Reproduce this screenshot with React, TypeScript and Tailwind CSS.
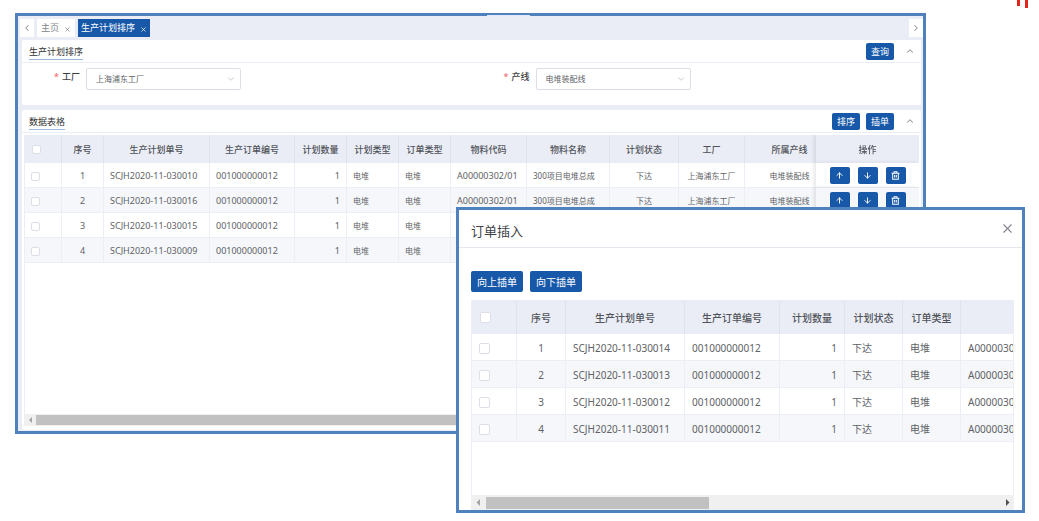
import React from "react";
import { ArrowDown, ArrowUp, ChevronDown, ChevronLeft, ChevronRight, ChevronUp, X } from "lucide-react";

type PlanRow = { plan: string };

const mainRows: PlanRow[] = [
  { plan: "SCJH2020-11-030010" },
  { plan: "SCJH2020-11-030016" },
  { plan: "SCJH2020-11-030015" },
  { plan: "SCJH2020-11-030009" },
];

const insertRows: PlanRow[] = [
  { plan: "SCJH2020-11-030014" },
  { plan: "SCJH2020-11-030013" },
  { plan: "SCJH2020-11-030012" },
  { plan: "SCJH2020-11-030011" },
];

const mainWidths = [37, 42, 106, 85, 52, 52, 52, 76, 83, 69, 66, 90, 103];
const insertWidths = [45, 49, 119, 95, 65, 58, 58, 201];

function Columns({ widths }: { widths: number[] }) {
  return (
    <colgroup>
      {widths.map((w, i) => (
        <col key={i} style={{ width: w }} />
      ))}
    </colgroup>
  );
}

function Tick({ label, large }: { label: string; large?: boolean }) {
  return (
    <input
      type="checkbox"
      aria-label={label}
      className={`block appearance-none rounded-xs border border-[#dcdfe6] bg-white checked:bg-[#1858a8] ${
        large ? "size-[11px]" : "size-[9px]"
      }`}
    />
  );
}

function TrashIcon() {
  return (
    <svg viewBox="0 0 16 16" className="size-[9px]" fill="none" stroke="currentColor" strokeWidth="1.8">
      <path d="M1 4h14M5.5 4V1.5h5V4M3 4v10.5h10V4M6.5 7v4.5M9.5 7v4.5" />
    </svg>
  );
}

function PrimaryButton({ children }: { children: React.ReactNode }) {
  return (
    <button className="h-[17px] w-7 rounded-xs bg-[#1858a8] text-[9px] leading-none text-white">{children}</button>
  );
}

function IconButton({ label, children }: { label: string; children: React.ReactNode }) {
  return (
    <button
      aria-label={label}
      className="flex h-[17px] w-5 items-center justify-center rounded-xs bg-[#1858a8] text-white"
    >
      {children}
    </button>
  );
}

function Field({ id, label, value }: { id: string; label: string; value: string }) {
  return (
    <div className="flex items-start gap-[6px]">
      <label htmlFor={id} className="w-[58px] pt-[3px] text-right text-[9px] leading-3 font-medium text-[#3d4045]">
        <span className="mr-[3px] text-[#f56c6c]">*</span>
        {label}
      </label>
      <div className="relative w-[155px]">
        <select
          id={id}
          className="block h-[22px] w-full appearance-none rounded-xs border border-[#dcdfe6] bg-white px-[9px] text-[8px] text-[#606266]"
        >
          <option>{value}</option>
        </select>
        <ChevronDown
          className="pointer-events-none absolute top-[6px] right-[5px] size-[10px] text-[#c0c4cc]"
          strokeWidth={2}
        />
      </div>
    </div>
  );
}

function CardHeader({ title, children }: { title: string; children: React.ReactNode }) {
  return (
    <div className="flex h-[23px] items-center border-b border-[#ebeef5] pr-[6px] pl-[7px]">
      <h2 className="border-b border-[#9dbbdd] pt-px text-[9px] leading-[15px] text-[#303133]">{title}</h2>
      <div className="ml-auto flex items-center gap-[6px]">
        {children}
        <button aria-label="收起" className="ml-[5px] text-[#909399]">
          <ChevronUp className="size-[10px]" strokeWidth={2.5} />
        </button>
      </div>
    </div>
  );
}

const mainHead =
  "h-[28px] border-r border-[#dfe3ec] bg-[#eaedf5] px-0 pt-px text-center text-[9px] font-medium text-[#50535a]";
const mainBase = "h-[25px] border-r border-b border-[#ebeef5] px-[6px] pt-[2px] whitespace-nowrap";
const mainCell = `${mainBase} text-[8px]`;
const mainCode = `${mainBase} text-[9px]`;

function MainTable() {
  const heads = [
    "序号",
    "生产计划单号",
    "生产订单编号",
    "计划数量",
    "计划类型",
    "订单类型",
    "物料代码",
    "物料名称",
    "计划状态",
    "工厂",
    "所属产线",
  ];
  return (
    <table className="w-[calc(100%+19px)] table-fixed border-separate border-spacing-0 leading-3 text-[#606266]">
      <Columns widths={mainWidths} />
      <thead>
        <tr>
          <th className={`${mainHead} pl-[7px]`}>
            <Tick label="全选" />
          </th>
          {heads.map((h) => (
            <th key={h} className={mainHead}>
              {h}
            </th>
          ))}
          <th className="sticky right-0 bg-[#eaedf5] pt-px text-center text-[9px] font-medium text-[#50535a] shadow-[-2px_0_4px_rgba(0,0,0,0.1)]">
            操作
          </th>
        </tr>
      </thead>
      <tbody>
        {mainRows.map((r, i) => (
          <tr key={r.plan} className="bg-white even:bg-[#f5f7fa]">
            <td className={mainCell}>
              <Tick label={`选择第${i + 1}行`} />
            </td>
            <td className={`${mainCode} text-center`}>{i + 1}</td>
            <td className={mainCode}>{r.plan}</td>
            <td className={mainCode}>001000000012</td>
            <td className={`${mainCode} text-right`}>1</td>
            <td className={mainCell}>电堆</td>
            <td className={mainCell}>电堆</td>
            <td className={mainCode}>A00000302/01</td>
            <td className={mainCell}>300项目电堆总成</td>
            <td className={`${mainCell} text-center`}>下达</td>
            <td className={`${mainCell} text-center`}>上海浦东工厂</td>
            <td className={`${mainCell} text-center`}>电堆装配线</td>
            <td className="sticky right-0 border-b border-[#ebeef5] bg-inherit p-0 shadow-[-2px_0_4px_rgba(0,0,0,0.1)]">
              <div className="flex justify-center gap-2">
                <IconButton label="上移">
                  <ArrowUp className="size-[9px]" strokeWidth={2.5} />
                </IconButton>
                <IconButton label="下移">
                  <ArrowDown className="size-[9px]" strokeWidth={2.5} />
                </IconButton>
                <IconButton label="删除">
                  <TrashIcon />
                </IconButton>
              </div>
            </td>
          </tr>
        ))}
      </tbody>
    </table>
  );
}

const insHead =
  "h-[34px] border-r border-[#dfe3ec] bg-[#eaedf5] px-0 pt-px text-center text-[10px] font-medium text-[#50535a]";
const insCell = "h-[27px] border-r border-b border-[#ebeef5] px-[7px] pt-[2px] whitespace-nowrap";

function InsertTable() {
  const heads = ["序号", "生产计划单号", "生产订单编号", "计划数量", "计划状态", "订单类型"];
  return (
    <table className="w-[690px] table-fixed border-separate border-spacing-0 text-[10px] leading-4 text-[#606266]">
      <Columns widths={insertWidths} />
      <thead>
        <tr>
          <th className={`${insHead} pl-2`}>
            <Tick label="全选订单" large />
          </th>
          {heads.map((h) => (
            <th key={h} className={insHead}>
              {h}
            </th>
          ))}
          <td className={insHead} />
        </tr>
      </thead>
      <tbody>
        {insertRows.map((r, i) => (
          <tr key={r.plan} className="bg-white even:bg-[#f5f7fa]">
            <td className={insCell}>
              <Tick label={`选择订单${i + 1}`} large />
            </td>
            <td className={`${insCell} text-center`}>{i + 1}</td>
            <td className={insCell}>{r.plan}</td>
            <td className={insCell}>001000000012</td>
            <td className={`${insCell} text-right`}>1</td>
            <td className={insCell}>下达</td>
            <td className={insCell}>电堆</td>
            <td className={insCell}>A00000302/01</td>
          </tr>
        ))}
      </tbody>
    </table>
  );
}

function MainWindow() {
  return (
    <section className="relative mr-[113px] ml-[15px] border-[3px] border-[#4f81bd] bg-[#eaedf5]">
      <div className="absolute -top-px left-[469px] h-px w-[43px] bg-[#dfe8f4]" />
      <nav className="flex h-6 items-center pl-[2px] text-[9px]">
        <button aria-label="向左" className="flex h-[18px] w-[14px] items-center justify-center bg-white text-[#909399]">
          <ChevronLeft className="size-[10px]" strokeWidth={2.5} />
        </button>
        <button className="ml-[3px] flex h-[18px] items-center gap-[5px] bg-white px-1 text-[#80848c]">
          主页
          <X className="mt-[2px] size-[7px]" strokeWidth={2.5} />
        </button>
        <button className="ml-[3px] flex h-[18px] items-center gap-[5px] bg-[#1858a8] px-[3px] text-white">
          生产计划排序
          <X className="mt-[2px] size-[7px]" strokeWidth={2.5} />
        </button>
        <button
          aria-label="向右"
          className="ml-auto flex h-[18px] w-[14px] items-center justify-center bg-white text-[#909399]"
        >
          <ChevronRight className="size-[10px]" strokeWidth={2.5} />
        </button>
      </nav>

      <div className="mr-[2px] ml-1 rounded-xs bg-white">
        <CardHeader title="生产计划排序">
          <PrimaryButton>查询</PrimaryButton>
        </CardHeader>
        <div className="grid grid-cols-2 pt-[5px] pb-[15px]">
          <Field id="factory" label="工厂" value="上海浦东工厂" />
          <Field id="line" label="产线" value="电堆装配线" />
        </div>
      </div>

      <div className="mt-[5px] mr-[2px] mb-px ml-1 rounded-xs bg-white pb-1">
        <CardHeader title="数据表格">
          <PrimaryButton>排序</PrimaryButton>
          <PrimaryButton>插单</PrimaryButton>
        </CardHeader>
        <div className="mx-[2px] mt-[2px] min-h-[279px] overflow-hidden border-l border-[#ebeef5]">
          <MainTable />
        </div>
        <div className="mx-[2px] flex h-3 items-center bg-[#f0f0f0]">
          <svg viewBox="0 0 12 12" className="size-3 text-[#a3a3a3]" fill="currentColor">
            <path d="M8 3v6L5 6z" />
          </svg>
          <div className="h-[10px] w-2/3 bg-[#c1c1c1]" />
        </div>
      </div>
    </section>
  );
}

function InsertDialog() {
  return (
    <section
      role="dialog"
      aria-labelledby="insert-title"
      className="absolute top-[207px] right-[14px] left-[456px] border-[3px] border-[#4f81bd] bg-white"
    >
      <header className="flex h-[38px] items-center justify-between border-b border-[#e4e7ed] px-3">
        <h2 id="insert-title" className="pt-1 text-[13px] leading-5 text-[#404246]">
          订单插入
        </h2>
        <button aria-label="关闭" className="-mr-[5px] text-[#85888f]">
          <X className="size-[15px]" strokeWidth={1.8} />
        </button>
      </header>
      <div className="pr-2 pl-3">
        <div className="flex gap-[7px] pt-[23px] pb-2">
          <button className="h-[21px] rounded-xs bg-[#1858a8] px-[6px] text-[10px] leading-none text-white">向上插单</button>
          <button className="h-[21px] rounded-xs bg-[#1858a8] px-[6px] text-[10px] leading-none text-white">向下插单</button>
        </div>
        <div className="min-h-[195px] overflow-hidden border-x border-[#ebeef5]">
          <InsertTable />
        </div>
        <div className="flex h-[15px] items-center bg-[#f0f0f0]">
          <svg viewBox="0 0 15 15" className="size-[15px] text-[#a3a3a3]" fill="currentColor">
            <path d="M9 4v7L5.500 7.500z" />
          </svg>
          <div className="h-3 w-[41%] bg-[#c1c1c1]" />
          <svg viewBox="0 0 15 15" className="ml-auto size-[15px] text-[#505050]" fill="currentColor">
            <path d="M7 4v7l3.500-3.500z" />
          </svg>
        </div>
      </div>
    </section>
  );
}

export default function App() {
  return (
    <main className="relative min-h-screen bg-white pt-[13px] font-['Noto_Sans','Noto_Sans_CJK_SC',sans-serif]">
      <div className="absolute top-0 right-[11px] flex gap-[5px]">
        <span className="h-[6px] w-[3px] bg-[#e0241d]" />
        <span className="h-2 w-[3px] bg-[#e0241d]" />
      </div>
      <MainWindow />
      <InsertDialog />
    </main>
  );
}
